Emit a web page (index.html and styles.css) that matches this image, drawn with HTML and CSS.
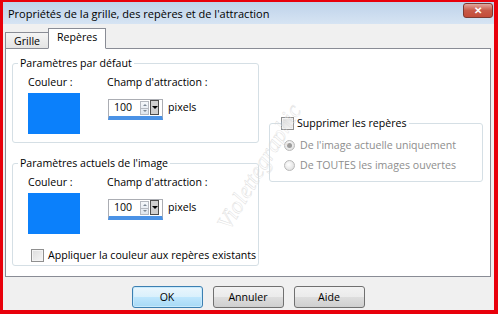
FILE: index.html
```html
<!DOCTYPE html>
<html lang="fr">
<head>
    <meta charset="UTF-8">
    <title>Propriétés de la grille</title>
    <link rel="stylesheet" href="styles.css">
</head>
<body>
    <div class="window">
        <div class="titlebar">
            <span class="title">Propriétés de la grille, des repères et de l'attraction</span>
            <span class="close">&#10005;</span>
        </div>

        <div class="dialog">
            <div class="tabs">
                <span class="tab">Grille</span>
                <span class="tab active">Repères</span>
            </div>

            <div class="panel">
                <div class="col-left">
                    <!-- Paramètres par défaut -->
                    <fieldset class="group">
                        <legend>Paramètres par défaut</legend>
                        <div class="group-body">
                            <span>Couleur :</span>
                            <span>Champ d'attraction :</span>
                            <div class="swatch"></div>
                            <div class="spin">
                                <div class="spin-box">
                                    <span class="spin-value">100</span>
                                    <span class="spin-arrows"><i class="up"></i><i class="down"></i></span>
                                    <span class="spin-drop"></span>
                                </div>
                                <span class="unit">pixels</span>
                            </div>
                        </div>
                    </fieldset>

                    <!-- Paramètres actuels -->
                    <fieldset class="group">
                        <legend>Paramètres actuels de l'image</legend>
                        <div class="group-body with-check">
                            <span>Couleur :</span>
                            <span>Champ d'attraction :</span>
                            <div class="swatch"></div>
                            <div class="spin">
                                <div class="spin-box">
                                    <span class="spin-value">100</span>
                                    <span class="spin-arrows"><i class="up"></i><i class="down"></i></span>
                                    <span class="spin-drop"></span>
                                </div>
                                <span class="unit">pixels</span>
                            </div>
                            <label class="check-row">
                                <span class="checkbox"></span>
                                Appliquer la couleur aux repères existants
                            </label>
                        </div>
                    </fieldset>
                </div>

                <div class="col-right">
                    <fieldset class="group group-delete">
                        <legend><span class="checkbox"></span>Supprimer les repères</legend>
                        <div class="radio-row"><span class="radio checked"></span>De l'image actuelle uniquement</div>
                        <div class="radio-row"><span class="radio"></span>De TOUTES les images ouvertes</div>
                    </fieldset>
                </div>
            </div>

            <div class="buttons">
                <button class="btn default">OK</button>
                <button class="btn">Annuler</button>
                <button class="btn">Aide</button>
            </div>
        </div>

        <div class="watermark">Violettegraphic</div>
    </div>
</body>
</html>
```

FILE: styles.css
```css
body {
    margin: 0;
    font-family: "Open Sans", "Noto Sans", sans-serif;
    font-size: 10.6px;
    color: #000;
}

.window {
    position: relative;
    width: 498px;
    height: 314px;
    box-sizing: border-box;
    border: solid #e8000b;
    border-width: 2px 4px 4px 3px;
    background: #f0f0f0;
    display: flex;
    flex-direction: column;
    overflow: hidden;
}

/* barre de titre */
.titlebar {
    height: 22px;
    display: flex;
    justify-content: space-between;
    align-items: center;
    padding: 0 1px 0 5px;
    background: linear-gradient(#bed2ea, #d6e4f3);
}

.title {
    font-size: 11px;
}

.close {
    align-self: flex-start;
    margin-top: 1px;
    width: 28px;
    height: 13px;
    border: 1px solid #7d3a32;
    border-radius: 3px;
    background: linear-gradient(#e4a79c, #c85a48 50%, #c44c39);
    color: #fff;
    font-size: 10px;
    font-weight: bold;
    line-height: 13px;
    text-align: center;
}

.dialog {
    flex: 1;
    min-height: 0;
    display: flex;
    flex-direction: column;
    padding: 4px 3px 2px 2px;
}

/* onglets */
.tabs {
    display: flex;
    align-items: flex-end;
    height: 21px;
    margin-bottom: -1px;
    position: relative;
    z-index: 1;
}

.tab {
    height: 17px;
    box-sizing: border-box;
    padding: 0 8px;
    border: 1px solid #898c95;
    background: linear-gradient(#f4f4f4, #e4e4e4);
    line-height: 16px;
}

.tab.active {
    height: 21px;
    margin-left: -1px;
    background: #fff;
    border-bottom-color: #fff;
    line-height: 17px;
}

.panel {
    flex: 1;
    min-height: 0;
    display: flex;
    gap: 10px;
    padding: 7px 7px 0 6px;
    background: #fff;
    border: 1px solid #898c95;
}

.col-left {
    width: 247px;
    display: flex;
    flex-direction: column;
    gap: 13px;
}

.col-right {
    width: 214px;
    margin-top: 60px;
}

/* cadres de groupe */
.group {
    margin: 0;
    padding: 0;
    min-width: 0;
    border: 1px solid #d5dfe5;
    border-radius: 3px;
}

.group legend {
    margin-left: 5px;
    padding: 0 2px;
    line-height: 14px;
}

.group-body {
    display: grid;
    grid-template-columns: 79px 1fr;
    row-gap: 4px;
    padding: 5px 0 8px 15px;
    line-height: 14px;
}

.group-body.with-check {
    padding-bottom: 3px;
}

.swatch {
    width: 52px;
    height: 41px;
    background: #0b80fb;
}

/* champ numérique */
.spin {
    display: flex;
    align-items: flex-start;
    margin-top: 6px;
}

.spin-box {
    width: 55px;
    height: 21px;
    box-sizing: border-box;
    display: flex;
    align-items: flex-start;
    margin-left: 1px;
    border: 1px solid #abadb3;
    border-bottom: 4px solid #4a92e6;
}

.spin-value {
    flex: 1;
    padding-left: 5px;
    line-height: 15px;
}

.spin-arrows {
    width: 9px;
    height: 14px;
    margin-top: 1px;
    display: flex;
    flex-direction: column;
    border: 1px solid #b5b9c0;
    box-sizing: border-box;
    background: linear-gradient(#f5f7fa, #dfe6ee);
}

.spin-arrows i {
    flex: 1;
    display: flex;
    align-items: center;
    justify-content: center;
}

.spin-arrows i::before {
    content: "";
    border-left: 2px solid transparent;
    border-right: 2px solid transparent;
}

.spin-arrows .up::before {
    border-bottom: 2px solid #7d8996;
}

.spin-arrows .down {
    border-top: 1px solid #b5b9c0;
}

.spin-arrows .down::before {
    border-top: 2px solid #7d8996;
}

.spin-drop {
    width: 9px;
    height: 15px;
    margin: 0 3px 0 1px;
    box-sizing: border-box;
    border: 1px solid #4d4d4d;
    background: #d0d0d0;
    display: flex;
    align-items: center;
    justify-content: center;
}

.spin-drop::before {
    content: "";
    border-left: 3px solid transparent;
    border-right: 3px solid transparent;
    border-top: 3px solid #000;
}

.unit {
    margin-left: 5px;
    line-height: 16px;
}

/* cases à cocher et boutons radio */
.check-row {
    grid-column: 1 / 3;
    display: flex;
    align-items: center;
    gap: 4px;
    margin: 10px 0 0 3px;
    white-space: nowrap;
}

.checkbox {
    display: inline-block;
    width: 13px;
    height: 13px;
    box-sizing: border-box;
    border: 1px solid #8f8f8f;
    background: linear-gradient(135deg, #dcdcdc, #f6f6f6);
    box-shadow: inset 0 0 0 1px #f4f4f4;
    vertical-align: middle;
}

.group-delete {
    padding: 8px 0 9px 14px;
}

.group-delete legend {
    margin-left: -3px;
    padding: 0 2px 0 0;
    display: flex;
    align-items: center;
    gap: 3px;
}

.radio-row {
    display: flex;
    align-items: center;
    gap: 5px;
    line-height: 14px;
    color: #8e8e8e;
}

.radio-row + .radio-row {
    margin-top: 6px;
}

.radio {
    width: 11px;
    height: 11px;
    box-sizing: border-box;
    border-radius: 50%;
    border: 1px solid #b9b9b9;
    background: radial-gradient(circle at 40% 40%, #ffffff, #d8d8d8);
    display: flex;
    align-items: center;
    justify-content: center;
}

.radio.checked::before {
    content: "";
    width: 5px;
    height: 5px;
    border-radius: 50%;
    background: #9c9c9c;
}

/* boutons */
.buttons {
    display: flex;
    justify-content: center;
    gap: 10px;
    margin-top: 9px;
}

.btn {
    width: 71px;
    height: 22px;
    border: 1px solid #707070;
    border-radius: 3px;
    background: linear-gradient(#f2f2f2 0%, #ebebeb 50%, #dddddd 51%, #cfcfcf 100%);
    font-family: inherit;
    font-size: 10.6px;
    padding: 0;
    color: #000;
}

.btn.default {
    border-color: #3c7fb1;
    background: linear-gradient(#eaf6fd 0%, #d9f0fc 50%, #bee6fd 51%, #a7d9f5 100%);
    box-shadow: inset 0 0 0 1px #c8eafc;
}

/* filigrane */
.watermark {
    position: absolute;
    left: 186px;
    top: 152px;
    transform: rotate(-59deg);
    font: italic 23px "Liberation Serif", serif;
    color: transparent;
    -webkit-text-stroke: 0.4px #dadada;
    pointer-events: none;
}
```
